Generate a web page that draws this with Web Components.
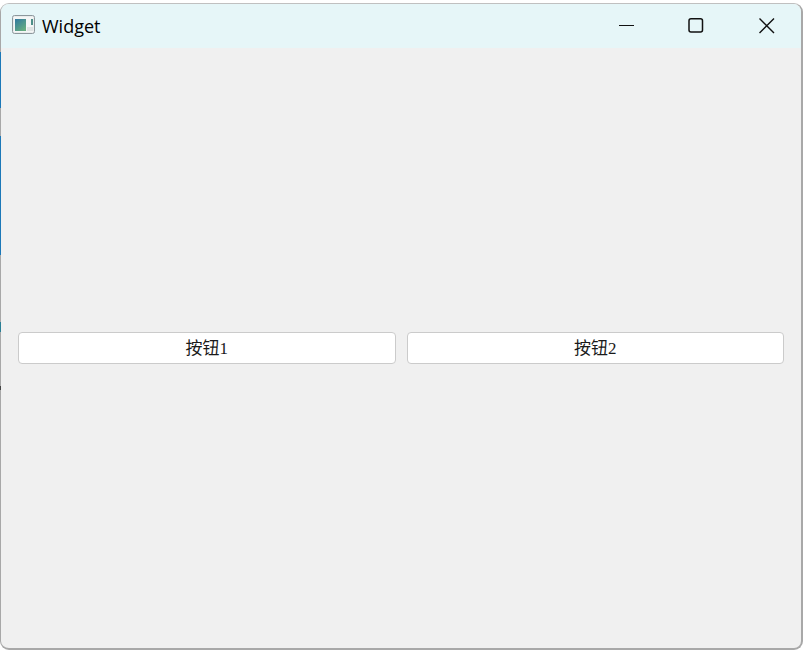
<!DOCTYPE html>
<html lang="zh">
<head>
<meta charset="utf-8">
<title>Widget</title>
<style>
html, body { margin: 0; height: 100%; background: #ffffff; overflow: hidden; }
</style>
</head>
<body>
<app-window>
  <span slot="title">Widget</span>
  <app-button>按钮1</app-button>
  <app-button>按钮2</app-button>
</app-window>

<script>
const barTemplate = document.createElement('template')
barTemplate.innerHTML = `
<style>
:host {
  align-items: center;
  background-color: #e6f6f8;
  border-radius: 8px 8px 0 0;
  color: #000000;
  display: flex;
  flex: none;
  font: 400 18px "Open Sans", "Noto Sans", sans-serif;
  height: 44px;
  padding-left: 11px;
}
.icon { display: block; margin: 0 6px 2px 0; }
.name { flex: 1; padding-bottom: 1px; }
.ctl { display: block; }
</style>
<svg class="icon" width="24" height="20" viewBox="0 0 24 20">
  <defs>
    <linearGradient id="pic" x1="0" y1="0" x2="0.7" y2="1">
      <stop offset="0" stop-color="#2f78a0"/>
      <stop offset="1" stop-color="#66ad80"/>
    </linearGradient>
  </defs>
  <rect x="0.5" y="0.5" width="22" height="18" rx="2" fill="#e9ecec" stroke="#8c979c"/>
  <rect x="2" y="2" width="19" height="15" fill="#f4f6f6"/>
  <rect x="3" y="4" width="11" height="12" fill="url(#pic)"/>
  <rect x="19" y="4" width="2" height="6" fill="#4d8f88"/>
  <rect x="15" y="12" width="6" height="4" fill="#dfe3e3"/>
</svg>
<span class="name"><slot></slot></span>
<svg class="ctl" width="184" height="44" viewBox="0 0 184 44" fill="none" stroke="#111111">
  <path d="M2 21.5h15" stroke-width="1"/>
  <rect x="72" y="14.7" width="13.5" height="13.3" rx="2" stroke-width="1.5"/>
  <path d="M142.5 14.5l14.5 14.5M157 14.5l-14.5 14.5" stroke-width="1.4"/>
</svg>
`

class AppTitlebar extends HTMLElement {
  constructor () {
    super()
    this.attachShadow({ mode: 'open' })
    this.shadowRoot.appendChild(barTemplate.content.cloneNode(true))
  }
}

const windowTemplate = document.createElement('template')
windowTemplate.innerHTML = `
<style>
:host {
  background-color: #f0f0f0;
  border-color: #c0c0c0 #a8a8a8 #a8a8a8 #a8a8a8;
  border-radius: 9px;
  border-style: solid;
  border-width: 1px 2px 2px 1px;
  box-sizing: border-box;
  display: flex;
  flex-direction: column;
  height: 647px;
  margin-top: 3px;
  position: relative;
  width: 803px;
}
.content {
  align-items: center;
  display: flex;
  flex: 1;
  gap: 11px;
  padding: 0 17px;
}
/* stops are page y, the strip starts at the top of the page */
.strip {
  background: linear-gradient(to bottom,
    transparent 0 14px, #a8a8a8 14px 52px, #1c78b8 52px 108px, #a8a8a8 108px 136px, #1c78b8 136px 255px,
    #a8a8a8 255px 322px, #2a7f95 322px 332px, #a8a8a8 332px 386px, #444444 386px 390px,
    #a8a8a8 390px);
  height: 400px;
  left: -1px;
  position: absolute;
  top: -4px;
  width: 1px;
}
</style>
<div class="strip"></div>
<app-titlebar><slot name="title"></slot></app-titlebar>
<div class="content"><slot></slot></div>
`

class AppWindow extends HTMLElement {
  constructor () {
    super()
    this.attachShadow({ mode: 'open' })
    this.shadowRoot.appendChild(windowTemplate.content.cloneNode(true))
  }
}

const buttonTemplate = document.createElement('template')
buttonTemplate.innerHTML = `
<style>
:host {
  display: block;
  flex: 1;
  min-width: 0;
}
button {
  background-color: #ffffff;
  border: 1px solid #cbcbcb;
  border-radius: 4px;
  box-sizing: border-box;
  color: #1a1a1a;
  display: block;
  font: 400 17px "Liberation Serif", "Noto Sans CJK SC", serif;
  height: 32px;
  margin: 0;
  padding: 0 0 3px;
  width: 100%;
}
</style>
<button><slot></slot></button>
`

class AppButton extends HTMLElement {
  constructor () {
    super()
    this.attachShadow({ mode: 'open' })
    this.shadowRoot.appendChild(buttonTemplate.content.cloneNode(true))
  }
}

customElements.define('app-titlebar', AppTitlebar)
customElements.define('app-window', AppWindow)
customElements.define('app-button', AppButton)
</script>
</body>
</html>
